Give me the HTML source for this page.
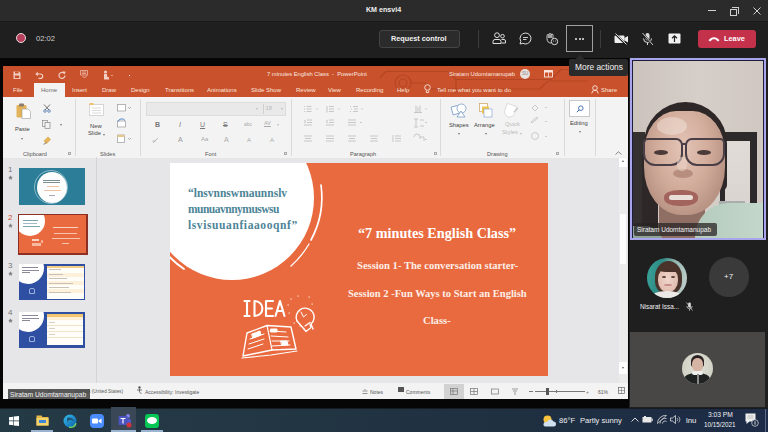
<!DOCTYPE html>
<html><head><meta charset="utf-8">
<style>
*{margin:0;padding:0;box-sizing:border-box}
html,body{width:768px;height:432px;overflow:hidden;background:#1f1f1f;font-family:"Liberation Sans",sans-serif;position:relative}
.a{position:absolute}
.t{position:absolute;white-space:nowrap;line-height:1}
svg{position:absolute;overflow:visible}
.tab{position:absolute;top:87px;font-size:6px;color:#fbe6df;white-space:nowrap;line-height:1}
.rl{position:absolute;font-size:5.8px;color:#444;white-space:nowrap;line-height:1}
.gl{position:absolute;top:152px;font-size:5.6px;color:#555;white-space:nowrap;line-height:1}
.sep{position:absolute;top:99px;width:1px;height:57px;background:#dadada}
</style></head><body>
<!-- ============ Teams title bar ============ -->
<div class="a" style="left:0;top:0;width:768px;height:21px;background:#2b2b2b"></div>
<div class="t" style="left:366px;top:7px;font-size:7.1px;font-weight:bold;color:#f0f0f0">KM ensvi4</div>
<div class="a" style="left:708px;top:10px;width:8px;height:1px;background:#d0d0d0"></div>
<div class="a" style="left:730px;top:9px;width:7px;height:7px;border:1px solid #d0d0d0"></div><div class="a" style="left:732px;top:7px;width:7px;height:7px;border-top:1px solid #d0d0d0;border-right:1px solid #d0d0d0"></div>
<svg style="left:753px;top:7px" width="8" height="8"><path d="M0.5 0.5L7.5 7.5M7.5 0.5L0.5 7.5" stroke="#d0d0d0" stroke-width="1"/></svg>

<!-- ============ Teams toolbar ============ -->
<div class="a" style="left:0;top:21px;width:768px;height:37px;background:#1f1f1f"></div><div class="a" style="left:0;top:21px;width:768px;height:1px;background:#191919"></div>
<div class="a" style="left:16px;top:33px;width:10px;height:10px;border-radius:50%;background:#b8405c;border:1.5px solid #e6dcde"></div>
<div class="t" style="left:36px;top:35px;font-size:7.6px;color:#cfcfcf">02:02</div>
<div class="a" style="left:379px;top:30px;width:81px;height:18px;background:#2b2b2b;border:1px solid #444;border-radius:3px"></div>
<div class="t" style="left:391px;top:35px;font-size:7.3px;font-weight:bold;color:#f2f2f2">Request control</div>
<div class="a" style="left:478px;top:30px;width:1px;height:18px;background:#3c3c3c"></div>
<!-- people icon -->
<svg style="left:492px;top:32px" width="14" height="13"><circle cx="5" cy="3.2" r="2.4" fill="none" stroke="#ddd" stroke-width="1"/><circle cx="10.5" cy="4.2" r="1.8" fill="none" stroke="#ddd" stroke-width="1"/><path d="M1 11.5v-2a2 2 0 0 1 2-2h4a2 2 0 0 1 2 2v2zM9.5 7.5h2.5a1.5 1.5 0 0 1 1.5 1.5v2h-4" fill="none" stroke="#ddd" stroke-width="1"/></svg>
<!-- chat icon -->
<svg style="left:519px;top:32px" width="13" height="13"><path d="M6.5 1a5.5 5.5 0 1 1-2.7 10.3L1 12l0.8-2.7A5.5 5.5 0 0 1 6.5 1z" fill="none" stroke="#ddd" stroke-width="1"/><path d="M4 5.5h5M4 7.5h3.5" stroke="#ddd" stroke-width="0.9"/></svg>
<!-- reactions icon -->
<svg style="left:545px;top:32px" width="14" height="14"><path d="M2 6.5V3.5a1 1 0 0 1 2 0V6M4 6V2.5a1 1 0 0 1 2 0V6M6 6V3a1 1 0 0 1 2 0v4.5M2 6.5c0 3 1.5 4.5 4 4.5" fill="none" stroke="#ddd" stroke-width="0.9"/><circle cx="9.5" cy="9.5" r="3.2" fill="#1f1f1f" stroke="#ddd" stroke-width="1"/><circle cx="8.5" cy="9" r="0.5" fill="#ddd"/><circle cx="10.5" cy="9" r="0.5" fill="#ddd"/></svg>
<!-- more -->
<div class="a" style="left:566px;top:25px;width:27px;height:27px;border:1px solid #a0a0a0"></div>
<div class="a" style="left:575px;top:38px;width:2px;height:2px;background:#eee;border-radius:1px"></div>
<div class="a" style="left:578.5px;top:38px;width:2px;height:2px;background:#eee;border-radius:1px"></div>
<div class="a" style="left:582px;top:38px;width:2px;height:2px;background:#eee;border-radius:1px"></div>
<div class="a" style="left:600px;top:30px;width:1px;height:18px;background:#3c3c3c"></div>
<!-- camera off -->
<svg style="left:614px;top:33px" width="15" height="12"><path d="M1 2.5h8.5a1 1 0 0 1 1 1V9a1 1 0 0 1-1 1H1.5a1 1 0 0 1-1-1V3.5a1 1 0 0 1 1-1z" fill="#eee"/><path d="M10.5 5l3.5-2v6.5l-3.5-2z" fill="#eee"/><path d="M1 0.5L12 11.5" stroke="#1f1f1f" stroke-width="2"/><path d="M1.5 0.5L12.5 11.5" stroke="#eee" stroke-width="0.9"/></svg>
<!-- mic off -->
<svg style="left:641px;top:32px" width="13" height="14"><rect x="4.5" y="1" width="4" height="7.5" rx="2" fill="#ddd"/><path d="M2.5 6.5a4 4 0 0 0 8 0M6.5 10.5v2.5" fill="none" stroke="#ddd" stroke-width="1"/><path d="M1 1L12 13" stroke="#1f1f1f" stroke-width="2"/><path d="M1.5 1L12 13" stroke="#ddd" stroke-width="0.9"/></svg>
<!-- share -->
<svg style="left:668px;top:33px" width="13" height="11"><rect x="0.5" y="0.5" width="12" height="10" rx="1" fill="#f2f2f2"/><path d="M6.5 9V3M4 5.2L6.5 2.8L9 5.2" fill="none" stroke="#1f1f1f" stroke-width="1.2"/></svg>
<!-- leave -->
<div class="a" style="left:698px;top:30px;width:58px;height:18px;background:#c4314b;border-radius:3px"></div>
<svg style="left:708px;top:36px" width="12" height="6"><path d="M0.5 4.2C3.5 0.2 8.5 0.2 11.5 4.2L9.8 5.6L8 3.8C7 3.2 5 3.2 4 3.8L2.2 5.6z" fill="#fff"/></svg>
<div class="t" style="left:724px;top:35px;font-size:7.4px;font-weight:bold;color:#fff">Leave</div>

<!-- ============ shared screen black ============ -->
<div class="a" style="left:0;top:58px;width:629px;height:350px;background:#060606"></div>

<!-- ============ PowerPoint window ============ -->
<div class="a" style="left:3px;top:66px;width:625px;height:333px;background:#e6e6e9"></div>
<div class="a" style="left:3px;top:66px;width:625px;height:31px;background:#c9512b"></div>
<!-- ribbon -->
<div class="a" style="left:3px;top:97px;width:625px;height:61px;background:#f3f3f3"></div>
<div class="a" style="left:34px;top:83px;width:31px;height:14px;background:#f3f3f3"></div>

<svg style="left:370px;top:66px" width="230" height="31" fill="none" stroke="rgba(110,30,10,0.22)" stroke-width="1.2"><path d="M16 5.5h62M16 5.5l-6 6M78 5.5l8 8h95l10-10h30"/><circle cx="33" cy="17" r="8"/><circle cx="33" cy="17" r="4"/><path d="M41 17h15l6 6h40M86 13.5v14M110 23h60l8-8h40"/></svg>
<!-- QAT icons -->
<svg style="left:13px;top:71px" width="8" height="8" opacity="0.85"><path d="M0.5 0.5h5.5l1.5 1.5v6h-7z" fill="#fbe7e0"/><rect x="2" y="0.5" width="3.5" height="2" fill="#c9512b"/><rect x="1.8" y="4.5" width="4.4" height="2.6" fill="#c9512b"/></svg>
<svg style="left:35px;top:71px" width="8" height="8" opacity="0.85"><path d="M2 3h3.5a2.2 2.2 0 0 1 0 4.4H3.5" fill="none" stroke="#fbe7e0" stroke-width="1.2"/><path d="M0.3 3L2.8 0.8v4.4z" fill="#fbe7e0"/></svg>
<svg style="left:58px;top:71px" width="8" height="8" opacity="0.85"><path d="M6 2.2A3 3 0 1 0 7 4.5" fill="none" stroke="#fbe7e0" stroke-width="1.2"/><path d="M4.5 0.3L7.6 0.8L6.8 3.6z" fill="#fbe7e0"/></svg>
<svg style="left:80px;top:70px" width="9" height="9" opacity="0.8"><path d="M0.5 0.5h7v4.5h-7zM2 2h4M2 3.5h4" fill="none" stroke="#fbe7e0" stroke-width="0.7"/><path d="M2.5 6l2 2l2.5-2.5" fill="none" stroke="#fbe7e0" stroke-width="0.8"/></svg>
<svg style="left:102px;top:70px" width="12" height="10" opacity="0.85"><circle cx="3.5" cy="2" r="1.6" fill="#fbe7e0"/><path d="M2 4h3v2.5l2 1v2h-5z" fill="#fbe7e0"/><path d="M9 5l1 1l1-1" fill="none" stroke="#fbe7e0" stroke-width="0.6"/></svg>
<div class="a" style="left:128.5px;top:74.5px;width:1.5px;height:1.5px;background:#fbe7e0"></div>

<div class="t" style="left:267px;top:72px;font-size:5.8px;color:#fbe7e0">7 minutes English Class&nbsp; -&nbsp; PowerPoint</div>
<div class="t" style="left:449px;top:72px;font-size:5.8px;color:#fbe7e0">Siratam Udomtamanupab</div>
<div class="a" style="left:520px;top:69px;width:10px;height:10px;border-radius:50%;background:#e8e0dc"></div>
<div class="t" style="left:522px;top:72px;font-size:4.5px;color:#888">SU</div>
<svg style="left:544px;top:70px" width="9" height="8"><rect x="0.5" y="0.5" width="8" height="6.5" fill="none" stroke="#fbe7e0" stroke-width="0.9"/><rect x="0.5" y="0.5" width="8" height="2" fill="#fbe7e0"/><path d="M4.5 2.5v4.5" stroke="#fbe7e0" stroke-width="0.8"/></svg>

<!-- tabs -->
<div class="tab" style="left:13px">File</div>
<div class="tab" style="left:41px;color:#6a6a6a">Home</div>
<div class="tab" style="left:72px">Insert</div>
<div class="tab" style="left:102px">Draw</div>
<div class="tab" style="left:131px">Design</div>
<div class="tab" style="left:165px">Transitions</div>
<div class="tab" style="left:207px">Animations</div>
<div class="tab" style="left:251px">Slide Show</div>
<div class="tab" style="left:296px">Review</div>
<div class="tab" style="left:328px">View</div>
<div class="tab" style="left:356px">Recording</div>
<div class="tab" style="left:397px">Help</div>
<svg style="left:424px;top:84px" width="7" height="10"><circle cx="3.5" cy="3.5" r="2.8" fill="none" stroke="#fbe7e0" stroke-width="0.9"/><path d="M2.3 6.5v2h2.4v-2" fill="none" stroke="#fbe7e0" stroke-width="0.9"/></svg>
<div class="tab" style="left:437px">Tell me what you want to do</div>
<svg style="left:591px;top:85px" width="8" height="9"><circle cx="4" cy="3" r="2.3" fill="none" stroke="#fbe7e0" stroke-width="0.9"/><path d="M0.8 8.5a3.2 3.2 0 0 1 6.4 0" fill="none" stroke="#fbe7e0" stroke-width="0.9"/></svg>
<div class="tab" style="left:601px">Share</div>

<!-- ribbon content -->
<div class="sep" style="left:75px"></div>
<div class="sep" style="left:140px"></div>
<div class="sep" style="left:291px"></div>
<div class="sep" style="left:440px"></div>
<div class="sep" style="left:564px"></div>
<div class="sep" style="left:595px"></div>
<div class="gl" style="left:23px">Clipboard</div>
<div class="gl" style="left:100px">Slides</div>
<div class="gl" style="left:205px">Font</div>
<div class="gl" style="left:350px">Paragraph</div>
<div class="gl" style="left:487px">Drawing</div>
<!-- paste -->
<svg style="left:16px;top:103px" width="15" height="16"><rect x="0.5" y="2" width="10" height="12.5" rx="1" fill="#e2b35b"/><rect x="3" y="0.5" width="5" height="3" rx="1" fill="#8a7a6a"/><path d="M6 6h6l2.5 2.5v7h-8.5z" fill="#fff" stroke="#999" stroke-width="0.6"/></svg>
<div class="rl" style="left:15px;top:127px">Paste</div>
<div class="a" style="left:21px;top:138px;width:0;height:0;border-left:1.5px solid transparent;border-right:1.5px solid transparent;border-top:2px solid #777"></div>
<svg style="left:43px;top:104px" width="8" height="9"><path d="M1 0.5L6 6M7 0.5L2 6" stroke="#555" stroke-width="0.8" fill="none"/><circle cx="2" cy="7" r="1.3" fill="none" stroke="#3a66a8" stroke-width="0.7"/><circle cx="6" cy="7" r="1.3" fill="none" stroke="#3a66a8" stroke-width="0.7"/></svg>
<svg style="left:42px;top:120px" width="9" height="9"><rect x="0.5" y="0.5" width="5" height="6" fill="none" stroke="#888" stroke-width="0.7"/><rect x="3" y="2.5" width="5" height="6" fill="#f3f3f3" stroke="#888" stroke-width="0.7"/></svg>
<div class="a" style="left:60px;top:124px;width:0;height:0;border-left:1.5px solid transparent;border-right:1.5px solid transparent;border-top:2px solid #777"></div>
<svg style="left:43px;top:136px" width="9" height="9"><path d="M5 0.5l3 3l-4.5 4.5l-3-3z" fill="#e2b35b"/><path d="M1 8.5l2-2" stroke="#555" stroke-width="1"/></svg>
<!-- new slide -->
<svg style="left:89px;top:103px" width="15" height="13"><rect x="0.5" y="1.5" width="14" height="11" fill="#fff" stroke="#c8c8c8" stroke-width="0.7"/><rect x="0.5" y="0" width="4" height="2" fill="#f0c070"/><path d="M3 5h9M3 7.5h9M3 10h9" stroke="#d0d0d0" stroke-width="0.8"/></svg>
<div class="rl" style="left:90px;top:124px">New</div>
<div class="rl" style="left:88px;top:131px">Slide</div><div class="a" style="left:103px;top:134px;width:0;height:0;border-left:1.5px solid transparent;border-right:1.5px solid transparent;border-top:2px solid #777"></div>
<svg style="left:117px;top:104px" width="14" height="8"><rect x="0.5" y="0.5" width="8" height="6.5" fill="#fff" stroke="#999" stroke-width="0.7"/><path d="M11 3l1.5 1.5L14 3" fill="none" stroke="#888" stroke-width="0.6"/></svg>
<svg style="left:117px;top:119px" width="9" height="9"><rect x="0.5" y="2" width="8" height="6" fill="#fff" stroke="#999" stroke-width="0.7"/><path d="M1 2.5a4 4 0 0 1 7 -1" fill="none" stroke="#3a78c2" stroke-width="0.9"/></svg>
<svg style="left:117px;top:134px" width="14" height="9"><rect x="0.5" y="1" width="7" height="7.5" fill="#fff" stroke="#999" stroke-width="0.7"/><rect x="0.5" y="1" width="7" height="2" fill="#e9c98a"/><path d="M11 4l1.5 1.5L14 4" fill="none" stroke="#888" stroke-width="0.6"/></svg>
<!-- font -->
<div class="a" style="left:146px;top:102px;width:140px;height:14px;background:#e9e9e9;border:1px solid #dcdcdc"></div>
<div class="a" style="left:263px;top:104px;width:1px;height:10px;background:#d0d0d0"></div>
<div class="rl" style="left:264px;top:106px;color:#bbb">&nbsp;18</div>
<div class="a" style="left:281px;top:108px;width:0;height:0;border-left:1.5px solid transparent;border-right:1.5px solid transparent;border-top:2px solid #bbb"></div>
<div class="a" style="left:256px;top:108px;width:0;height:0;border-left:1.5px solid transparent;border-right:1.5px solid transparent;border-top:2px solid #bbb"></div>
<div class="rl" style="left:155px;top:121px;font-size:7px;font-weight:bold;color:#777">B</div>
<div class="rl" style="left:179px;top:121px;font-size:7px;font-style:italic;color:#777">I</div>
<div class="rl" style="left:200px;top:121px;font-size:7px;text-decoration:underline;color:#777">U</div>
<div class="rl" style="left:223px;top:121px;font-size:7px;text-decoration:line-through;color:#777">S</div>
<div class="rl" style="left:244px;top:122px;font-size:5px;color:#aaa">abc</div>
<div class="rl" style="left:264px;top:121px;font-size:5.5px;color:#aaa;text-decoration:underline">AV</div>
<div class="a" style="left:277px;top:124px;width:0;height:0;border-left:1.5px solid transparent;border-right:1.5px solid transparent;border-top:2px solid #bbb"></div>
<svg style="left:152px;top:137px" width="8" height="7"><path d="M1 6L6 1M0.5 4h3" stroke="#aaa" stroke-width="0.8" fill="none"/></svg>
<div class="rl" style="left:178px;top:136px;font-size:7px;color:#999">A</div>
<div class="rl" style="left:201px;top:136px;font-size:6px;color:#aaa">Aa</div>
<div class="rl" style="left:224px;top:136px;font-size:7px;color:#aaa">A</div>
<div class="rl" style="left:247px;top:137px;font-size:6px;color:#aaa">A</div>
<div class="rl" style="left:270px;top:137px;font-size:6px;color:#aaa">A</div>
<div class="a" style="left:284px;top:152px;width:3px;height:3px;border:0.7px solid #aaa"></div><div class="a" style="left:68px;top:152px;width:3px;height:3px;border:0.7px solid #aaa"></div>

<!-- paragraph icons -->
<svg style="left:303px;top:105px" width="130" height="40" fill="none" stroke="#b5b5b5" stroke-width="0.7">
<!-- row1 -->
<path d="M1 1.5h1M1 4h1M1 6.5h1M3.5 1.5h5M3.5 4h5M3.5 6.5h5"/><path d="M13 3.5l1 1l1-1"/>
<path d="M24 1v6.5M26 1.5h5M26 4h5M26 6.5h5"/><path d="M35 3.5l1 1l1-1"/>
<path d="M47 1.5h1M48 4h1M47 6.5h1M50 1.5h5M51 4h4M50 6.5h5"/><path d="M58 3.5l1 1l1-1"/>
<path d="M113 0.5v7M115 2v5.5M117 0.5v7M111 7.5h8"/><path d="M122 3.5l1 1l1-1"/>
<!-- row2 -->
<path d="M1 20h8M4 17.5h5M4 15h5M1 15l2 1.5l-2 1.5"/>
<path d="M23 20h8M26 17.5h5M26 15h5M25 15l-2 1.5l2 1.5"/>
<path d="M45 15h8M45 17.5h8M45 20h8"/><path d="M57 17l1 1l1-1"/>
<path d="M113 14v8M111 14h4M111 22h4M117 15h4M117 21h4"/><path d="M122 17l1 1l1-1"/>
<!-- row3 -->
<path d="M1 31h8M2 33.5h6M1 36h8"/>
<path d="M23 31h8M23 33.5h8M23 36h8"/>
<path d="M45 31h8M46 33.5h6M45 36h8"/>
<path d="M67 31h8M68 33.5h6M67 36h8"/>
<path d="M90 30v7M92 31h6M92 33.5h6M92 36h6"/>
<path d="M111 32a3 3 0 0 1 6 0v2M117 32h4v4"/><path d="M122 34l1 1l1-1"/>
</svg>
<div class="a" style="left:434px;top:152px;width:3px;height:3px;border:0.7px solid #aaa"></div>
<!-- drawing -->
<svg style="left:451px;top:103px" width="17" height="15"><rect x="1" y="3" width="8" height="8" transform="rotate(-15 5 7)" fill="#fff" stroke="#7a9cc8" stroke-width="0.8"/><circle cx="10.5" cy="5.5" r="4.5" fill="#fff" stroke="#7a9cc8" stroke-width="0.8"/><path d="M6 14l4-6l4 6z" fill="#fff" stroke="#7a9cc8" stroke-width="0.8"/></svg>
<div class="rl" style="left:449px;top:123px">Shapes</div>
<div class="a" style="left:458px;top:133px;width:0;height:0;border-left:1.5px solid transparent;border-right:1.5px solid transparent;border-top:2px solid #777"></div>
<svg style="left:479px;top:103px" width="14" height="15"><rect x="0.5" y="0.5" width="8" height="8" fill="#fff" stroke="#c9a35a" stroke-width="0.7"/><rect x="3" y="3.5" width="7" height="7" fill="#f0c64a"/><rect x="5" y="6" width="8" height="8" fill="#fff" stroke="#8da7d0" stroke-width="0.7"/></svg>
<div class="rl" style="left:474px;top:123px">Arrange</div>
<div class="a" style="left:485px;top:133px;width:0;height:0;border-left:1.5px solid transparent;border-right:1.5px solid transparent;border-top:2px solid #777"></div>
<svg style="left:503px;top:103px" width="16" height="16"><path d="M2 2h10v7c0 3-2 5.5-5 5.5s-5-2.5-5-5.5z" transform="rotate(20 8 8)" fill="#fff" stroke="#d8d8d8" stroke-width="0.8"/><path d="M11 9l4-4" stroke="#c8c8c8" stroke-width="1.5"/></svg>
<div class="rl" style="left:505px;top:122px;color:#bbb">Quick</div>
<div class="rl" style="left:502px;top:130px;color:#bbb">Styles</div><div class="a" style="left:520px;top:133px;width:0;height:0;border-left:1.5px solid transparent;border-right:1.5px solid transparent;border-top:2px solid #bbb"></div>
<svg style="left:530px;top:103px" width="22" height="40" fill="none" stroke="#c0c0c0" stroke-width="0.8"><path d="M2 5l3-3l3 3l-3 3z"/><path d="M15 4l1 1l1-1"/><path d="M1 19l6-5l1 1l-6 5z"/><path d="M15 18l1 1l1-1"/><circle cx="5" cy="33" r="3.5"/><path d="M15 33l1 1l1-1"/></svg>
<div class="a" style="left:556px;top:152px;width:3px;height:3px;border:0.7px solid #aaa"></div>
<!-- editing -->
<div class="a" style="left:569px;top:100px;width:21px;height:17px;background:#fff;border:1px solid #c8c8c8"></div>
<svg style="left:576px;top:105px" width="8" height="8"><circle cx="4.8" cy="3.2" r="2.3" fill="none" stroke="#3a66a8" stroke-width="0.9"/><path d="M3.2 4.8L0.8 7.2" stroke="#3a66a8" stroke-width="1"/></svg>
<div class="rl" style="left:570px;top:121px">Editing</div>
<div class="a" style="left:579px;top:131px;width:0;height:0;border-left:1.5px solid transparent;border-right:1.5px solid transparent;border-top:2px solid #777"></div>
<svg style="left:615px;top:151px" width="7" height="4"><path d="M0.5 3.5L3.5 0.8L6.5 3.5" fill="none" stroke="#666" stroke-width="0.8"/></svg>

<!-- ============ slide panel ============ -->
<div class="a" style="left:96px;top:157px;width:1px;height:226px;background:#d4d4d4"></div>
<div class="t" style="left:8px;top:166px;font-size:8px;color:#777">1</div>
<svg style="left:8px;top:175px" width="5" height="5" opacity="0.8"><path d="M2.5 0.2L3.2 1.8L4.9 1.9L3.6 3L4 4.8L2.5 3.9L1 4.8L1.4 3L0.1 1.9L1.8 1.8z" fill="#666"/></svg>
<div class="t" style="left:8px;top:214px;font-size:8px;color:#c9512b">2</div>
<svg style="left:8px;top:223px" width="5" height="5" opacity="0.8"><path d="M2.5 0.2L3.2 1.8L4.9 1.9L3.6 3L4 4.8L2.5 3.9L1 4.8L1.4 3L0.1 1.9L1.8 1.8z" fill="#666"/></svg>
<div class="t" style="left:8px;top:262px;font-size:8px;color:#777">3</div>
<svg style="left:8px;top:271px" width="5" height="5" opacity="0.8"><path d="M2.5 0.2L3.2 1.8L4.9 1.9L3.6 3L4 4.8L2.5 3.9L1 4.8L1.4 3L0.1 1.9L1.8 1.8z" fill="#666"/></svg>
<div class="t" style="left:8px;top:309px;font-size:8px;color:#777">4</div>
<svg style="left:8px;top:318px" width="5" height="5" opacity="0.8"><path d="M2.5 0.2L3.2 1.8L4.9 1.9L3.6 3L4 4.8L2.5 3.9L1 4.8L1.4 3L0.1 1.9L1.8 1.8z" fill="#666"/></svg>
<!-- thumb1 -->
<div class="a" style="left:19px;top:168px;width:66px;height:37px;background:#2c7d97;overflow:hidden">
  <div class="a" style="left:15px;top:1.5px;width:34px;height:34px;border-radius:50%;border:1px solid rgba(255,255,255,0.45)"></div>
  <div class="a" style="left:18px;top:3.5px;width:30px;height:31px;border-radius:50%;background:#fdfdfd"></div>
  <div class="a" style="left:24px;top:12px;width:17px;height:1px;background:#7d8e95"></div>
  <div class="a" style="left:24px;top:14px;width:17px;height:1px;background:#7d8e95"></div>
  <div class="a" style="left:28px;top:18px;width:12px;height:1px;background:#efc2a4"></div>
  <div class="a" style="left:25px;top:22px;width:17px;height:1px;background:#efc2a4"></div>
  <div class="a" style="left:30px;top:27px;width:6px;height:1px;background:#aab"></div>
</div>
<!-- thumb2 -->
<div class="a" style="left:17.5px;top:213.5px;width:70px;height:41px;background:#8c3026"></div>
<div class="a" style="left:19px;top:215px;width:67px;height:38px;background:#e96a3e;overflow:hidden">
  <div class="a" style="left:-4px;top:-9px;width:30px;height:30px;border-radius:50%;background:#fff"></div>
  <div class="a" style="left:4px;top:5px;width:15px;height:1px;background:#7fa3b0"></div>
  <div class="a" style="left:4px;top:8px;width:14px;height:1px;background:#9fbac4"></div>
  <div class="a" style="left:4px;top:11px;width:17px;height:1px;background:#7fa3b0"></div>
  <div class="a" style="left:34px;top:11.5px;width:25px;height:1.2px;background:#fbd3c2"></div>
  <div class="a" style="left:35px;top:17.5px;width:23px;height:1px;background:#f8c4ae"></div>
  <div class="a" style="left:33px;top:22.5px;width:28px;height:1px;background:#f8c4ae"></div>
  <div class="a" style="left:43px;top:28px;width:7px;height:1px;background:#f8c4ae"></div>
  <div class="a" style="left:13px;top:24px;width:7px;height:1.5px;background:#fbd3c2"></div>
  <div class="a" style="left:13px;top:28px;width:9px;height:2.5px;background:#f6b9a0"></div>
  <div class="a" style="left:22px;top:25px;width:2px;height:3px;border-radius:50%;background:#f8c4ae"></div>
</div>
<!-- thumb3 -->
<div class="a" style="left:19px;top:264px;width:66px;height:36px;background:#2f4fa3;overflow:hidden">
  <div class="a" style="left:-7px;top:-12px;width:32px;height:32px;border-radius:50%;background:#fff"></div>
  <div class="a" style="left:3px;top:3px;width:16px;height:1px;background:#8a8a9a"></div>
  <div class="a" style="left:3px;top:5.5px;width:17px;height:1px;background:#8a8a9a"></div>
  <div class="a" style="left:3px;top:8px;width:8px;height:1px;background:#8a8a9a"></div>
  <div class="a" style="left:10px;top:24px;width:6px;height:6px;border:1px solid #9fb0dc;border-radius:2px 2px 0 0"></div>
  <div class="a" style="left:28px;top:2px;width:37px;height:33px;background:#fffdf8"></div>
  <div class="a" style="left:28px;top:2px;width:37px;height:2px;background:#f5cf86"></div>
  <div class="a" style="left:28px;top:9px;width:37px;height:4px;background:#fdf1dc"></div>
  <div class="a" style="left:28px;top:17px;width:37px;height:4px;background:#fdf1dc"></div>
  <div class="a" style="left:28px;top:25px;width:37px;height:4px;background:#fdf1dc"></div>
  <div class="a" style="left:30px;top:5px;width:12px;height:1px;background:#c9c2b8"></div>
  <div class="a" style="left:30px;top:10px;width:14px;height:1px;background:#c9c2b8"></div>
  <div class="a" style="left:30px;top:14px;width:18px;height:1px;background:#c9c2b8"></div>
  <div class="a" style="left:30px;top:19px;width:24px;height:1px;background:#c9c2b8"></div>
  <div class="a" style="left:30px;top:23px;width:20px;height:1px;background:#c9c2b8"></div>
  <div class="a" style="left:30px;top:28px;width:22px;height:1px;background:#c9c2b8"></div>
</div>
<!-- thumb4 -->
<div class="a" style="left:19px;top:312px;width:66px;height:36px;background:#2f4fa3;overflow:hidden">
  <div class="a" style="left:-7px;top:-12px;width:32px;height:32px;border-radius:50%;background:#fff"></div>
  <div class="a" style="left:3px;top:3px;width:16px;height:1px;background:#8a8a9a"></div>
  <div class="a" style="left:3px;top:5.5px;width:17px;height:1px;background:#8a8a9a"></div>
  <div class="a" style="left:3px;top:8px;width:8px;height:1px;background:#8a8a9a"></div>
  <div class="a" style="left:10px;top:24px;width:6px;height:6px;border:1px solid #9fb0dc;border-radius:2px 2px 0 0"></div>
  <div class="a" style="left:28px;top:2px;width:36px;height:31px;background:#fffdf8"></div>
  <div class="a" style="left:28px;top:2px;width:36px;height:3px;background:#f3c56e"></div>
  <div class="a" style="left:28px;top:5px;width:36px;height:3px;background:#fdf0d6"></div>
  <div class="a" style="left:28px;top:13px;width:36px;height:1px;background:#f1e3c8"></div>
  <div class="a" style="left:28px;top:19px;width:36px;height:1px;background:#f1e3c8"></div>
  <div class="a" style="left:28px;top:25px;width:36px;height:1px;background:#f1e3c8"></div>
  <div class="a" style="left:30px;top:10px;width:6px;height:1px;background:#d8d0c4"></div>
  <div class="a" style="left:30px;top:16px;width:6px;height:1px;background:#d8d0c4"></div>
  <div class="a" style="left:30px;top:22px;width:6px;height:1px;background:#d8d0c4"></div>
</div>
<!-- scrollbar -->
<div class="a" style="left:619px;top:157px;width:8px;height:226px;background:#ebebeb"></div>
<div class="a" style="left:620px;top:214px;width:6px;height:50px;background:#fcfcfc"></div>
<div class="a" style="left:619px;top:158px;width:8px;height:9px;background:#fff"></div><div class="a" style="left:621.5px;top:160px;width:0;height:0;border-left:1.5px solid transparent;border-right:1.5px solid transparent;border-bottom:2px solid #666"></div>
<div class="a" style="left:619px;top:362px;width:8px;height:12px;background:#fff"></div><div class="a" style="left:621.5px;top:367px;width:0;height:0;border-left:1.5px solid transparent;border-right:1.5px solid transparent;border-top:2px solid #666"></div>

<!-- ============ slide ============ -->
<div class="a" style="left:170px;top:163px;width:378px;height:213px;background:#e96a3e;overflow:hidden">
  <div class="a" style="left:-20px;top:-47px;width:164px;height:164px;border-radius:50%;background:#fff"></div>
  <svg style="left:0;top:0" width="378" height="213"><path d="M151 22 A90 90 0 0 1 141 77" fill="none" stroke="#fff" stroke-width="1.7" stroke-linecap="round"/><path d="M139 81 A90 90 0 0 1 121 103" fill="none" stroke="#fff" stroke-width="1.3" stroke-linecap="round"/><path d="M-10 82 A87 87 0 0 0 14 106" fill="none" stroke="#fff" stroke-width="1.8" stroke-linecap="round"/></svg>
  <div class="t" style="left:18px;top:24.5px;font-family:'Liberation Serif',serif;font-weight:bold;font-size:11.5px;color:#4d8597">“lnsvnnswmaunnslv</div>
  <div class="t" style="left:18px;top:40.5px;font-family:'Liberation Serif',serif;font-weight:bold;font-size:11.5px;letter-spacing:-0.5px;color:#4d8597">munuavnnymuswsu</div>
  <div class="t" style="left:18px;top:56.5px;font-family:'Liberation Serif',serif;font-weight:bold;font-size:11.5px;letter-spacing:0.6px;color:#4d8597">lsvisuuanfiaaooqnf”</div>
  <div class="t" style="left:188px;top:63px;font-family:'Liberation Serif',serif;font-weight:bold;font-size:14.2px;color:#fff">“7 minutes English Class”</div>
  <div class="t" style="left:187px;top:97.5px;font-family:'Liberation Serif',serif;font-weight:bold;font-size:10.6px;color:#fdeee8">Session 1- The conversation starter-</div>
  <div class="t" style="left:178px;top:126px;font-family:'Liberation Serif',serif;font-weight:bold;font-size:10.5px;color:#fdeee8">Session 2 -Fun Ways to Start an English</div>
  <div class="t" style="left:253px;top:153px;font-family:'Liberation Serif',serif;font-weight:bold;font-size:10.6px;color:#fdeee8">Class-</div>
  <!-- IDEA graphic -->
  <svg style="left:0;top:0" width="378" height="213" fill="none" stroke="#fff" stroke-linecap="round" stroke-linejoin="round">
    <path d="M74.5 138h5M77 138v15M74.5 153h5" stroke-width="2.1"/>
    <path d="M84.5 138v15M84.5 138c10.5 0 10.5 15 0 15" stroke-width="2.1"/>
    <path d="M103 138h-7v15h7M96 145.5h6" stroke-width="2.1"/>
    <path d="M105.5 153l4.5-15l4.5 15M107 148h6" stroke-width="2.1"/>
    <path d="M118 142h0.3M119 150h0.3M121 136h0.3M128 133h0.3M139 134h0.3M142 141h0.3M124 160h0.3M130 163h0.3" stroke-width="1.2"/>
    <path d="M127 158a9 9 0 1 1 14 3l2 5" stroke-width="1.4"/>
    <path d="M127 158l7 8" stroke-width="1.4"/>
    <path d="M134 166l2 2.5l5-4l-1-3M135 163l5-3.5" stroke-width="1.3"/>
    <path d="M131 149l2.5 5l3-2.5" stroke-width="1"/>
    <path d="M73 193l4-23l20-7.5l24 1.5l5 22l-24 1z" stroke-width="1.4"/>
    <path d="M97 162.5l5 24.5" stroke-width="1.2"/>
    <path d="M72 195l29-3l26-4" stroke-width="1.2"/>
    <path d="M80 176l14-5M79 181l15-5M78 186l15-5M100 168l16 1M101 173l17 1M102 178l17 0M102 183l18-1" stroke-width="1"/>
    <path d="M82 171l8-3l1 4l-8 3z" fill="#fff" stroke-width="1"/>
    <path d="M101 166l6 0l0 3l-6 0z" fill="#fff" stroke-width="1"/>
    <path d="M111 178l6 0l1 4l-6 0z" fill="#fff" stroke-width="1"/>
  </svg>
</div>

<!-- ============ status bar ============ -->
<div class="a" style="left:3px;top:383px;width:625px;height:16px;background:#f3f3f3"></div>
<div class="t" style="left:10px;top:389.5px;font-size:5px;color:#555">Slide 2 of 4</div>
<div class="a" style="left:48px;top:390px;width:4px;height:4px;border:0.7px solid #777"></div>
<div class="t" style="left:75px;top:389.5px;font-size:4.7px;color:#555">English (United States)</div>
<svg style="left:136px;top:386px" width="8" height="9"><circle cx="3.5" cy="1.5" r="1.2" fill="#555"/><path d="M3.5 3v3l2 2M1 4h5" fill="none" stroke="#555" stroke-width="0.8"/></svg>
<div class="t" style="left:145px;top:389.5px;font-size:5px;color:#555">Accessibility: Investigate</div>
<svg style="left:362px;top:389px" width="6" height="6"><path d="M0.5 2h5M0.5 4.5h5M3 0v1" stroke="#666" stroke-width="0.7"/></svg>
<div class="t" style="left:370px;top:389.5px;font-size:5px;color:#555">Notes</div>
<div class="a" style="left:398px;top:387px;width:6px;height:5px;background:#555"></div>
<div class="t" style="left:406px;top:389.5px;font-size:5px;color:#555">Comments</div>
<div class="a" style="left:444px;top:384px;width:20px;height:15px;background:#d2d2d2"></div>
<svg style="left:450px;top:388px" width="130" height="8" fill="none" stroke="#777" stroke-width="0.7"><rect x="0.5" y="0.5" width="7" height="6"/><path d="M0.5 3h7M3 0.5v6"/><rect x="20.5" y="0.5" width="7" height="6"/><path d="M20.5 3.5h7M24 0.5v6"/><rect x="41.5" y="1" width="7" height="5"/><path d="M62 1h6M63 3h4M65 4v3"/></svg>
<div class="a" style="left:529px;top:391px;width:4px;height:1px;background:#777"></div>
<div class="a" style="left:535px;top:391px;width:50px;height:1px;background:#777"></div>
<div class="a" style="left:546px;top:388px;width:3px;height:7px;background:#555"></div>
<div class="a" style="left:556px;top:390px;width:1px;height:3px;background:#777"></div>
<div class="t" style="left:586px;top:389.5px;font-size:5px;color:#777">+</div>
<div class="t" style="left:598px;top:389.5px;font-size:5px;color:#555">61%</div>
<svg style="left:618px;top:387px" width="7" height="7"><rect x="0.5" y="0.5" width="6" height="6" fill="none" stroke="#666" stroke-width="0.7"/><path d="M3.5 0.5v6M0.5 3.5h6" stroke="#666" stroke-width="0.5"/></svg>
<!-- name overlay for shared screen -->
<div class="a" style="left:8px;top:389px;width:82px;height:10px;background:rgba(72,72,72,0.9)"></div>
<div class="t" style="left:10px;top:391.5px;font-size:6.7px;color:#f4f4f4">Siratam Udomtamanupab</div>


<!-- ============ right panel ============ -->
<div class="a" style="left:629px;top:58px;width:139px;height:350px;background:#201f1f"></div>
<div class="a" style="left:629.5px;top:58px;width:136.5px;height:182px;border:2px solid #a9a5ea;background:#1e1c3c"></div>
<div class="a" style="left:633px;top:61px;width:130px;height:177px;overflow:hidden;background:linear-gradient(90deg,#cbc3bc,#d6cfc9 50%,#cfc7c0)">
  <!-- door frame right -->
  <div class="a" style="left:87px;top:71px;width:37px;height:110px;background:#2e2a2b"></div>
  <div class="a" style="left:92px;top:80px;width:25px;height:100px;background:linear-gradient(#e0dbd6,#d6d1cc)"></div>
  <div class="a" style="left:86px;top:140px;width:26px;height:10px;background:#a9adae"></div>
  <div class="a" style="left:118px;top:150px;width:8px;height:30px;background:#4660a8"></div>
  <!-- door frame left -->
  <div class="a" style="left:0px;top:71px;width:12px;height:110px;background:#34302f"></div>
  <!-- hair -->
  <div class="a" style="left:11px;top:41px;width:83px;height:70px;border-radius:42px 42px 0 0;background:#2e2727"></div>
  <div class="a" style="left:9px;top:90px;width:16px;height:90px;border-radius:6px;background:#2e2727"></div>
  <div class="a" style="left:82px;top:90px;width:12px;height:40px;border-radius:6px;background:#2e2727"></div>
  <!-- neck -->
  <div class="a" style="left:26px;top:130px;width:46px;height:50px;background:#8f6f63"></div>
  <!-- face -->
  <div class="a" style="left:11px;top:50px;width:81px;height:104px;border-radius:40% 40% 46% 46%;background:radial-gradient(ellipse at 48% 35%,#e3c4b6,#d1ab9a 45%,#b38e7f 80%,#8f7066)"></div>
  <!-- forehead highlight -->
  <div class="a" style="left:24px;top:56px;width:30px;height:18px;border-radius:50%;background:rgba(245,232,225,0.45)"></div>
  <!-- glasses -->
  <div class="a" style="left:10px;top:77px;width:40px;height:28px;border:2px solid #4b3f47;border-radius:5px 7px 12px 12px"></div>
  <div class="a" style="left:52px;top:77px;width:40px;height:28px;border:2px solid #4b3f47;border-radius:7px 5px 12px 12px"></div>
  <div class="a" style="left:49px;top:82px;width:4px;height:2px;background:#4b3f47"></div>
  <div class="a" style="left:21px;top:89px;width:14px;height:5px;border-radius:50%;background:#4a3a38"></div>
  <div class="a" style="left:64px;top:89px;width:14px;height:5px;border-radius:50%;background:#4a3a38"></div>
  <!-- nose -->
  <div class="a" style="left:40px;top:108px;width:20px;height:9px;border-radius:50%;background:#b88f7e"></div>
  <div class="a" style="left:44px;top:96px;width:10px;height:14px;border-radius:40%;background:rgba(235,210,198,0.6)"></div>
  <!-- mouth -->
  <div class="a" style="left:31px;top:129px;width:34px;height:16px;border-radius:45%;background:#a4645e"></div>
  <div class="a" style="left:36px;top:134px;width:24px;height:5px;border-radius:3px;background:#eadfd8"></div>
  <!-- shirt -->
  <div class="a" style="left:62px;top:142px;width:70px;height:40px;border-radius:34px 0 0 0;background:linear-gradient(90deg,#b4cbbd,#c4d8cb)"></div>
  <div class="a" style="left:-4px;top:165px;width:34px;height:30px;border-radius:0 18px 0 0;background:#8fa597"></div>
</div>
<div class="a" style="left:634px;top:223px;width:83px;height:13px;background:rgba(40,36,36,0.75);border-radius:2px"></div>
<div class="t" style="left:637px;top:226.5px;font-size:6.5px;color:#f4f4f4">Siratam Udomtamanupab</div>
<!-- avatar Nisarat -->
<div class="a" style="left:647px;top:258px;width:40px;height:40px;border-radius:50%;overflow:hidden;background:linear-gradient(100deg,#3aa59c 0%,#2e8a84 35%,#8fb5ae 60%,#c9d2cf 100%)">
  <div class="a" style="left:8px;top:3px;width:27px;height:32px;border-radius:50% 50% 35% 35%;background:#4a332b"></div>
  <div class="a" style="left:11px;top:10px;width:20px;height:24px;border-radius:45% 45% 48% 48%;background:radial-gradient(ellipse at 50% 45%,#f0d6cc,#dcb3a5)"></div>
  <div class="a" style="left:11px;top:7px;width:20px;height:7px;border-radius:50% 50% 10% 40%;background:#4a332b"></div>
  <div class="a" style="left:15px;top:18px;width:4px;height:2px;border-radius:50%;background:#5a3e38"></div>
  <div class="a" style="left:24px;top:18px;width:4px;height:2px;border-radius:50%;background:#5a3e38"></div>
  <div class="a" style="left:17px;top:26px;width:8px;height:2px;border-radius:50%;background:#c98c86"></div>
  <div class="a" style="left:4px;top:33px;width:32px;height:12px;border-radius:50% 50% 0 0;background:#ece8e6"></div>
</div>
<div class="t" style="left:640px;top:303.5px;font-size:6.4px;color:#f2f2f2">Nisarat Issa...</div>
<svg style="left:686px;top:302px" width="7" height="9"><rect x="2.2" y="0.5" width="2.6" height="5" rx="1.3" fill="#ddd"/><path d="M0.8 4a2.7 2.7 0 0 0 5.4 0M3.5 6.8v2" fill="none" stroke="#ddd" stroke-width="0.7"/><path d="M0.5 0.5L6.5 8.5" stroke="#ddd" stroke-width="0.7"/></svg>
<div class="a" style="left:709px;top:257px;width:40px;height:40px;border-radius:50%;background:#3b3a3a"></div>
<div class="t" style="left:724px;top:273px;font-size:8px;color:#f2f2f2">+7</div>
<!-- gray tile -->
<div class="a" style="left:630px;top:332px;width:135px;height:75px;background:#494745"></div>
<div class="a" style="left:682px;top:353px;width:31px;height:31px;border-radius:50%;overflow:hidden;background:radial-gradient(circle at 50% 40%,#e0e0d6,#c9cabd)">
  <div class="a" style="left:9px;top:2px;width:13px;height:12px;border-radius:50% 50% 20% 20%;background:#2a2222"></div>
  <div class="a" style="left:10px;top:5px;width:11px;height:14px;border-radius:45% 45% 48% 48%;background:#d6b4a4"></div>
  <div class="a" style="left:2px;top:20px;width:26px;height:14px;border-radius:45% 45% 0 0;background:#1e2220"></div>
  <div class="a" style="left:10px;top:18px;width:11px;height:4px;border-radius:2px;background:#eef0ee"></div>
  <div class="a" style="left:15px;top:21px;width:2px;height:10px;background:#8a8a8a"></div>
</div>
<!-- More actions tooltip -->
<div class="a" style="left:569px;top:59px;width:59px;height:17px;background:#2b2b2b;border-radius:2px"></div>
<div class="a" style="left:577px;top:56px;width:6px;height:6px;background:#2a2a2a;transform:rotate(45deg)"></div>
<div class="t" style="left:575px;top:63px;font-size:8.4px;color:#f2f2f2">More actions</div>

<!-- ============ taskbar ============ -->
<div class="a" style="left:0;top:408px;width:768px;height:24px;background:linear-gradient(90deg,#243a45,#233744 30%,#1f3040 65%,#1d2b47)"></div><div class="a" style="left:0;top:408px;width:768px;height:1px;background:rgba(20,24,26,0.8)"></div><div class="a" style="left:765px;top:409px;width:1px;height:23px;background:#5a6a88"></div>
<svg style="left:9px;top:416px" width="10" height="10"><path d="M0 1.3L4.2 0.7V4.6H0zM4.8 0.6L10 0V4.6H4.8zM0 5.2H4.2V9.3L0 8.7zM4.8 5.2H10V10L4.8 9.4z" fill="#fff"/></svg>
<!-- explorer -->
<svg style="left:36px;top:414px" width="13" height="12"><path d="M0.5 1.5h5l1 1.5h6v8.5h-12z" fill="#e8b94a"/><rect x="0.5" y="4" width="12" height="7.5" fill="#f7d46a"/><rect x="3" y="6" width="7" height="3" fill="#3b86d6"/></svg>
<div class="a" style="left:31px;top:430px;width:22px;height:2px;background:#9bb4d0"></div>
<!-- edge -->
<svg style="left:63px;top:414px" width="14" height="14"><defs><linearGradient id="eg" x1="0" y1="0" x2="1" y2="1"><stop offset="0" stop-color="#35c1f1"/><stop offset="1" stop-color="#0c59a4"/></linearGradient></defs><circle cx="7" cy="7" r="6.5" fill="url(#eg)"/><path d="M4 8.5c0-3 5.5-3.5 7-1c-0.5-3-4-5-7-3.5" fill="#1e2b3b" opacity="0.6"/><path d="M6 13.2c3 0.5 6-1 7-4" stroke="#6ad46a" stroke-width="1.5" fill="none"/></svg>
<!-- zoom -->
<div class="a" style="left:90px;top:414px;width:14px;height:14px;border-radius:4px;background:#4a8cff"></div>
<svg style="left:92px;top:418px" width="10" height="6"><rect x="0" y="0.5" width="6" height="5" rx="1" fill="#fff"/><path d="M6.5 2.5l3-2v5l-3-2z" fill="#fff"/></svg>
<!-- teams highlighted -->
<div class="a" style="left:111px;top:407px;width:25px;height:25px;background:#3a4756"></div>
<svg style="left:118px;top:413px" width="14" height="15"><circle cx="10" cy="3" r="2" fill="#7b83eb"/><rect x="7" y="5.5" width="6" height="6" rx="2" fill="#5059c9"/><rect x="0.5" y="3" width="9" height="9" rx="1" fill="#4b53bc"/><path d="M2.5 5.5h5M5 5.5v5" stroke="#fff" stroke-width="1.2"/><circle cx="11" cy="12" r="2.5" fill="#d13438"/></svg>
<div class="a" style="left:111px;top:430px;width:25px;height:2px;background:#9bb4d0"></div>
<!-- line -->
<div class="a" style="left:145px;top:414px;width:14px;height:14px;border-radius:3px;background:#06c755"></div>
<div class="a" style="left:147px;top:417px;width:10px;height:7px;border-radius:50%;background:#fff"></div>
<div class="a" style="left:141px;top:430px;width:22px;height:2px;background:#9bb4d0"></div>
<!-- weather -->
<svg style="left:542px;top:414px" width="14" height="13"><circle cx="5.5" cy="5.5" r="4" fill="#f9c33c"/><path d="M3 12.5h8.5a2.5 2.5 0 0 0 0-5a3.5 3.5 0 0 0-6.5 0.5a2.3 2.3 0 0 0-2 4.5z" fill="#cfe0ef"/></svg>
<div class="t" style="left:559px;top:417px;font-size:7.6px;color:#f0f0f0">86°F</div>
<div class="t" style="left:580px;top:417px;font-size:7.6px;color:#f0f0f0">Partly sunny</div>
<svg style="left:631px;top:417px" width="8" height="5"><path d="M0.5 4.5L4 1L7.5 4.5" fill="none" stroke="#eee" stroke-width="0.9"/></svg>
<svg style="left:642px;top:416px" width="11" height="7"><rect x="0.5" y="1" width="9" height="5.5" rx="0.5" fill="#e8e8e8"/><rect x="9.5" y="2.5" width="1.2" height="2.5" fill="#e8e8e8"/><rect x="2" y="0" width="2" height="1.5" fill="#e8e8e8"/></svg>
<svg style="left:657px;top:415px" width="10" height="9"><path d="M0.5 8.5a8 8 0 0 1 9-8M3 8.5a5 5 0 0 1 6.5-5M5.5 8.5a2.5 2.5 0 0 1 4-2" fill="none" stroke="#ddd" stroke-width="0.8"/><path d="M0.5 8.5L9.5 0.5" stroke="#ddd" stroke-width="0.6"/></svg>
<svg style="left:670px;top:415px" width="10" height="9"><path d="M0.5 3h2l3-2.5v8l-3-2.5h-2z" fill="none" stroke="#ddd" stroke-width="0.8"/><path d="M7 3a2 2 0 0 1 0 3M8.5 1.5a4 4 0 0 1 0 6" fill="none" stroke="#ddd" stroke-width="0.7"/></svg>
<div class="t" style="left:686px;top:417px;font-size:7.8px;color:#f0f0f0">lnu</div>
<div class="t" style="left:708px;top:412px;font-size:6.7px;color:#f0f0f0">3:03 PM</div>
<div class="t" style="left:704px;top:421.5px;font-size:6.3px;color:#f0f0f0">10/15/2021</div>
<svg style="left:745px;top:413px" width="14" height="14"><path d="M0.5 0.5h10v8h-6l-3 2.5v-2.5h-1z" fill="#eee"/><path d="M2.5 3h6M2.5 5h6" stroke="#999" stroke-width="0.6"/><circle cx="10" cy="10" r="3.3" fill="#1d2b47" stroke="#ccc" stroke-width="0.8"/><path d="M10 8.3v3.4" stroke="#eee" stroke-width="0.9"/></svg>

</body></html>
